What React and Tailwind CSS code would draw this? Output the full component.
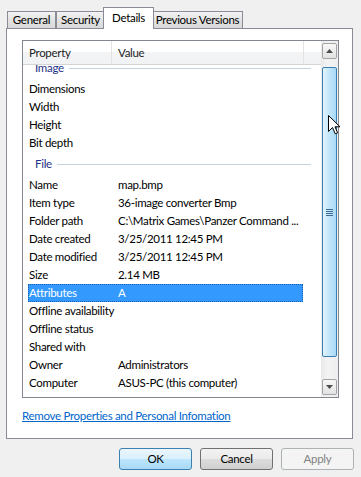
import React from "react";

const FONT = "font-['Lato','Liberation_Sans',sans-serif]";

const imageRows = ["Dimensions", "Width", "Height", "Bit depth"];
const fileRows = [
  ["Name", "map.bmp"],
  ["Item type", "36-image converter Bmp"],
  ["Folder path", "C:\\Matrix Games\\Panzer Command ..."],
  ["Date created", "3/25/2011 12:45 PM"],
  ["Date modified", "3/25/2011 12:45 PM"],
  ["Size", "2.14 MB"],
  ["Attributes", "A", true],
  ["Offline availability", ""],
  ["Offline status", ""],
  ["Shared with", ""],
  ["Owner", "Administrators"],
  ["Computer", "ASUS-PC (this computer)"],
];

function Group({ label }) {
  return (
    <div className="flex h-[24px] items-center pl-[12px] pr-[10px]">
      <span className="text-[#1e3287]">{label}</span>
      <div className="ml-[5px] h-px flex-1 bg-[#c3d1e0]" />
    </div>
  );
}

function Row({ label, value, selected }) {
  return (
    <div
      className={
        selected
          ? "ml-[5px] flex h-[18px] w-[275px] items-center bg-[#3399ff] text-white outline-1 outline-dotted outline-[#1b5ea8] -outline-offset-1"
          : "ml-[5px] flex h-[18px] w-[275px] items-center text-black"
      }
    >
      <span className="w-[90px] shrink-0 whitespace-nowrap pl-[1px]">{label}</span>
      <span className="whitespace-nowrap">{value}</span>
    </div>
  );
}

function ArrowBtn({ up }) {
  return (
    <div className="flex h-[16px] w-[15px] items-center justify-center rounded-[2px] border border-[#a3a3a3] bg-[linear-gradient(#f8f8f8,#e2e2e2)]">
      <svg width="7" height="4" viewBox="0 0 7 4">
        {up ? (
          <path d="M0 4 L3.5 0 L7 4 Z" fill="#4d4d4d" />
        ) : (
          <path d="M0 0 L3.5 4 L7 0 Z" fill="#4d4d4d" />
        )}
      </svg>
    </div>
  );
}

function Tab({ label, w, selected }) {
  if (selected) {
    return (
      <div
        className={`relative z-10 -mx-[2px] mb-[-1px] flex h-[22px] items-start justify-center whitespace-nowrap border border-b-0 border-[#898c95] bg-white pt-[4px] ${w}`}
      >
        {label}
      </div>
    );
  }
  return (
    <div
      className={`flex h-[17px] items-center justify-center whitespace-nowrap border border-b-0 border-[#898c95] bg-[linear-gradient(#f3f3f3,#e3e3e3_50%,#d9d9d9)] ${w}`}
    >
      {label}
    </div>
  );
}

function Button({ children, primary, disabled }) {
  const cls = primary
    ? "border-[#3c7fb1] bg-[linear-gradient(#eaf6fd,#d9f0fc_50%,#bee6fd_50%,#a7d9f5)] text-black"
    : disabled
    ? "border-[#adb2b5] bg-[#f4f4f4] text-[#838383]"
    : "border-[#707070] bg-[linear-gradient(#f2f2f2,#ebebeb_50%,#dddddd_50%,#cfcfcf)] text-black";
  return (
    <div
      className={`flex h-[22px] w-[73px] items-center justify-center rounded-[3px] border ${cls}`}
    >
      {children}
    </div>
  );
}

export default function App() {
  return (
    <div
      className={`relative flex h-[477px] w-[361px] flex-col overflow-hidden bg-[#f0f0f0] pl-[6px] pt-[7px] text-[11.5px] leading-none tracking-[-0.3px] text-black ${FONT}`}
    >
      {/* Tabs */}
      <div className="flex h-[21px] items-end pl-[1px]">
        <Tab label="General" w="w-[49px]" />
        <Tab label="Security" w="w-[49px]" />
        <Tab label="Details" w="w-[51px]" selected />
        <Tab label="Previous Versions" w="w-[91px]" />
      </div>

      {/* Panel */}
      <div className="flex h-[411px] w-[347px] flex-col border border-[#898c95] bg-white pl-[15px] pt-[11px]">
        {/* List box */}
        <div className="flex h-[358px] w-[317px] border border-[#828790] bg-white">
          <div className="flex min-w-0 flex-1 flex-col">
            <div className="flex h-[24px] shrink-0 border-b border-[#d5d5d5] bg-[linear-gradient(#ffffff_0%,#ffffff_48%,#f3f4f6_48%,#f1f2f4_100%)] text-[#1e1e1e]">
              <div className="flex w-[89px] items-center border-r border-[#e3e3e3] pl-[6px]">
                Property
              </div>
              <div className="flex w-[192px] items-center border-r border-[#e3e3e3] pl-[6px]">
                Value
              </div>
            </div>
            <div className="flex-1 overflow-hidden">
              <div className="-mt-[9px]">
                <Group label="Image" />
                {imageRows.map((r) => (
                  <Row key={r} label={r} value="" />
                ))}
                <Group label="File" />
                {fileRows.map(([l, v, s]) => (
                  <Row key={l} label={l} value={v} selected={s} />
                ))}
              </div>
            </div>
          </div>
          {/* Scrollbar */}
          <div className="flex w-[17px] shrink-0 flex-col items-center bg-[linear-gradient(90deg,#e9e9e9,#f3f3f3_40%,#eeeeee)] py-[2px]">
            <ArrowBtn up />
            <div className="mt-[8px] flex h-[290px] w-[15px] items-center justify-center rounded-[2px] border border-[#3c7fb1] bg-[linear-gradient(90deg,#e3f4fd,#c6e8fb_40%,#a9d9f5)]">
              <div className="flex flex-col gap-[1px]">
                <div className="h-px w-[7px] bg-[#3c6b96]" />
                <div className="h-px w-[7px] bg-[#3c6b96]" />
                <div className="h-px w-[7px] bg-[#3c6b96]" />
                <div className="h-px w-[7px] bg-[#3c6b96]" />
              </div>
            </div>
            <div className="flex-1" />
            <ArrowBtn />
          </div>
        </div>

        <div className="mt-[11px] leading-[14px] text-[#0066cc] underline">
          Remove Properties and Personal Infomation
        </div>
      </div>

      {/* Buttons */}
      <div className="mt-[9px] flex justify-end gap-[8px] pr-[7px]">
        <Button primary>OK</Button>
        <Button>Cancel</Button>
        <Button disabled>Apply</Button>
      </div>

      {/* Mouse cursor */}
      <svg
        className="absolute left-[328px] top-[115px]"
        width="13"
        height="21"
        viewBox="0 0 13 21"
      >
        <path
          d="M0.5 0.5 L0.5 16.5 L4.5 12.5 L7.2 18.8 L9.6 17.8 L7 11.8 L12 11.8 Z"
          fill="#ffffff"
          stroke="#000000"
          strokeWidth="1"
          strokeLinejoin="miter"
        />
      </svg>
    </div>
  );
}
